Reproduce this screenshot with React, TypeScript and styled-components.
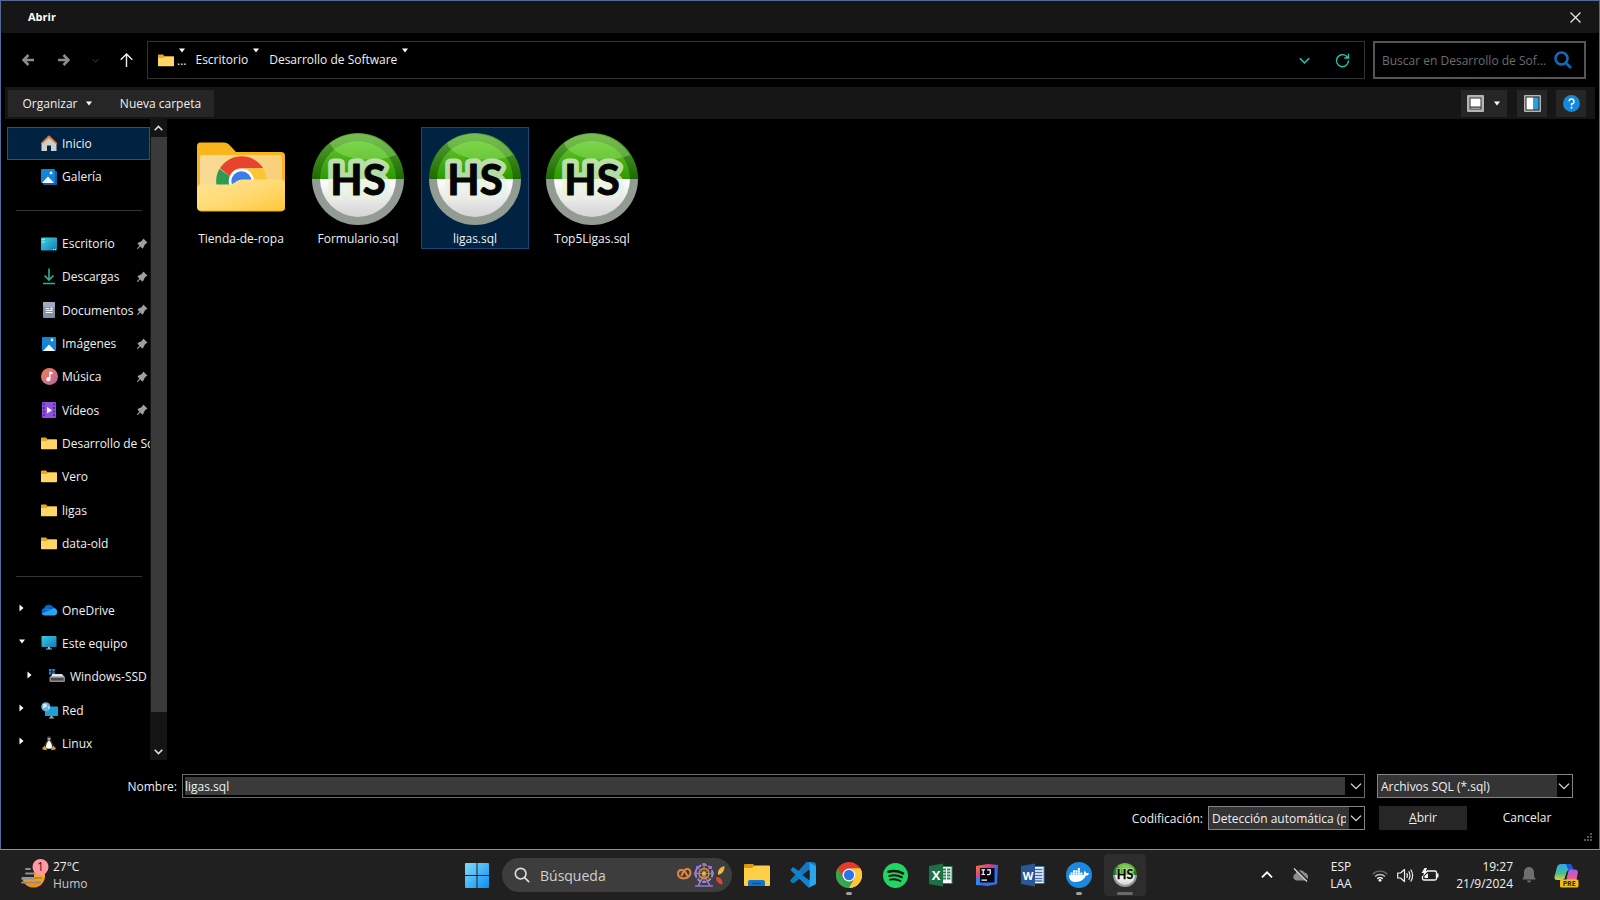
import React from "react";
import styled, { createGlobalStyle, css } from "styled-components";
import { FaDocker } from "react-icons/fa";
import { TbPinFilled } from "react-icons/tb";

const GlobalStyle = createGlobalStyle`
  *, *::before, *::after { box-sizing: border-box; }
  body { margin: 0; background: #000; }
  body, button, input, select {
    font-family: "Open Sans", "Noto Sans", sans-serif;
    font-size: 12px;
    line-height: 16px;
    color: #f0f0f0;
  }
  button { border: 0; padding: 0; background: none; }
  ul { list-style: none; margin: 0; padding: 0; }
  svg { display: block; flex: none; }
`;

const Screen = styled.div`
  min-height: 100vh;
  display: flex;
  flex-direction: column;
  background: #000;
`;

const Dialog = styled.main`
  position: relative;
  flex: 1;
  display: flex;
  flex-direction: column;
  border: 1px solid #536a96;
  border-bottom-color: #8494b6;
`;

const TitleBar = styled.header`
  display: flex;
  align-items: center;
  justify-content: space-between;
  height: 32px;
  padding: 0 8px 0 27px;
  background: #161616;
`;

const Title = styled.h1`
  margin: 0;
  font-size: 11px;
  font-weight: 700;
  line-height: 16px;
  color: #fff;
`;

const IconButton = styled.button<{ $width?: number }>`
  display: flex;
  align-items: center;
  justify-content: center;
  width: ${(p) => p.$width ?? 36}px;
  height: 32px;
`;

const NavRow = styled.nav`
  display: flex;
  align-items: center;
  height: 54px;
  padding: 0 13px 0 9px;
`;

const AddressBar = styled.div`
  flex: 1;
  min-width: 0;
  display: flex;
  align-items: center;
  height: 38px;
  margin: 0 8px 0 3px;
  padding: 0 3px 0 10px;
  border: 1px solid #333;
`;

const Crumb = styled.button<{ $gap?: number }>`
  display: flex;
  align-items: center;
  gap: ${(p) => p.$gap ?? 4}px;
  height: 30px;
  margin-right: 9px;
  white-space: nowrap;
`;

const CrumbArrow = styled.span`
  align-self: flex-start;
  padding-top: 3px;
`;

const CrumbMore = styled.span`
  display: flex;
  flex-direction: column;
  align-items: center;
  align-self: stretch;
  justify-content: space-between;
  padding: 3px 0 6px;
`;

const Spacer = styled.span`
  flex: 1;
`;

const SearchBox = styled.label`
  display: flex;
  align-items: center;
  width: 213px;
  height: 38px;
  padding: 0 12px 0 7px;
  border: 2px solid #555;
`;

const SearchInput = styled.input`
  flex: 1;
  min-width: 0;
  padding: 2px 0 0;
  border: 0;
  outline: 0;
  background: none;
  &::placeholder { color: #6e6e6e; opacity: 1; }
`;

const Toolbar = styled.div`
  display: flex;
  align-items: center;
  height: 32px;
  margin: 0 4px;
  padding: 1px 9px 0 3px;
  background: #161616;
`;

const ToolButton = styled.button<{ $width: number; $gap?: number; $inner?: number }>`
  display: flex;
  align-items: center;
  justify-content: center;
  gap: ${(p) => p.$inner ?? 9}px;
  width: ${(p) => p.$width}px;
  height: 27px;
  margin-left: ${(p) => p.$gap ?? 0}px;
  background: #262626;
`;

const Body = styled.div`
  flex: 1;
  display: flex;
`;

const Sidebar = styled.ul`
  display: grid;
  grid-auto-rows: 1fr;
  width: 143px;
  margin: 8px 0 0 6px;
`;

const TreeRow = styled.li`
  display: flex;
  align-items: center;
  min-width: 0;
`;

const TreeButton = styled.button<{ $selected?: boolean; $nested?: boolean }>`
  display: flex;
  align-items: center;
  width: 100%;
  height: 100%;
  padding: 0 1px 0 ${(p) => (p.$nested ? 8 : 0)}px;
  overflow: hidden;
  text-align: left;
  white-space: nowrap;
  ${(p) =>
    p.$selected &&
    css`
      background: #002342;
      box-shadow: inset 0 0 0 1px #12599c;
    `}
`;

const Twisty = styled.span`
  flex: none;
  width: 34px;
  padding: 0 0 4px 11px;
`;

const TreeIcon = styled.span`
  flex: none;
  display: flex;
  justify-content: center;
  width: 16px;
  margin-right: 5px;
`;

const TreeLabel = styled.span`
  flex: 1;
  padding-top: 1px;
`;

const Divider = styled.hr`
  width: 126px;
  margin: 0 0 0 9px;
  border: 0;
  border-top: 1px solid #333;
`;

const Scrollbar = styled.div`
  display: flex;
  flex-direction: column;
  width: 17px;
  background: #141414;
`;

const ScrollButton = styled.button`
  display: flex;
  align-items: center;
  justify-content: center;
  height: 18px;
`;

const ScrollTrack = styled.div`
  flex: 1;
  display: flex;
  flex-direction: column;
  padding-left: 1px;
`;

const ScrollThumb = styled.div`
  flex: 0 0 95%;
  background: #3a3a3a;
`;

const FileGrid = styled.ul`
  flex: 1;
  display: flex;
  flex-wrap: wrap;
  align-content: flex-start;
  gap: 9px;
  padding: 8px 0 0 20px;
`;

const FileTile = styled.button<{ $selected?: boolean }>`
  display: flex;
  flex-direction: column;
  align-items: center;
  gap: 6px;
  width: 108px;
  height: 122px;
  padding-top: 6px;
  ${(p) =>
    p.$selected &&
    css`
      background: #002342;
      box-shadow: inset 0 0 0 1px #12497c;
    `}
`;

const Footer = styled.form`
  display: grid;
  grid-template-columns: 181px minmax(0, 1fr) 196px;
  grid-template-rows: 24px 24px;
  row-gap: 8px;
  padding: 14px 26px 19px 0;
`;

const FieldLabel = styled.label`
  align-self: center;
  padding: 1px 5px 0 0;
  text-align: right;
`;

const ComboBox = styled.div`
  display: flex;
  align-items: center;
  margin-right: 12px;
  padding-left: 2px;
  border: 1px solid #6a6a6a;
`;

const NameInput = styled.input`
  flex: 1;
  min-width: 0;
  height: 18px;
  padding: 1px 0 0;
  border: 0;
  outline: 0;
  background: #3a3a3a;
`;

const ComboButton = styled.button`
  display: flex;
  align-items: center;
  justify-content: flex-end;
  width: 19px;
  height: 20px;
  padding-right: 2px;
`;

const SelectFrame = styled.div<{ $width?: number }>`
  display: flex;
  align-items: center;
  position: relative;
  width: ${(p) => (p.$width ? `${p.$width}px` : "auto")};
  height: 24px;
  border: 1px solid #848484;
  background: #000;
  svg { position: absolute; right: 2px; pointer-events: none; }
`;

const Select = styled.select`
  appearance: none;
  flex: 1;
  min-width: 0;
  height: 22px;
  margin-right: 15px;
  padding: 1px 3px 0;
  border: 0;
  border-radius: 0;
  outline: 0;
  background: #343434;
`;

const EncodingGroup = styled.div`
  grid-column: 1 / 3;
  display: flex;
  justify-content: flex-end;
  margin-right: 12px;
`;

const Actions = styled.div`
  display: flex;
  gap: 16px;
  padding-left: 2px;
`;

const ActionButton = styled.button<{ $filled?: boolean }>`
  width: 88px;
  background: ${(p) => (p.$filled ? "#262626" : "transparent")};
`;

const Grip = styled.span`
  position: absolute;
  right: 6px;
  bottom: 7px;
`;

const Taskbar = styled.footer`
  display: grid;
  grid-template-columns: 1fr auto 1fr;
  align-items: center;
  height: 50px;
  padding-left: 2px;
  background: #202020;
`;

const Weather = styled.button`
  justify-self: start;
  display: flex;
  align-items: center;
  gap: 4px;
  padding-left: 18px;
  text-align: left;
  line-height: 17px;
`;

const Muted = styled.span`
  display: block;
  color: #c8c8c8;
`;

const Apps = styled.div`
  display: flex;
  gap: 4px;
`;

const AppButton = styled.button<{ $active?: boolean }>`
  position: relative;
  display: flex;
  align-items: center;
  justify-content: center;
  width: 42px;
  height: 42px;
  border-radius: 4px;
  background: ${(p) => (p.$active ? "#2d2d2d" : "transparent")};
`;

const Indicator = styled.span<{ $wide?: boolean }>`
  position: absolute;
  bottom: 1px;
  width: ${(p) => (p.$wide ? 16 : 6)}px;
  height: 3px;
  border-radius: 2px;
  background: ${(p) => (p.$wide ? "#6a6a6a" : "#a0a0a0")};
`;

const TaskSearch = styled.label`
  align-self: center;
  display: flex;
  align-items: center;
  width: 230px;
  height: 34px;
  padding: 0 7px 0 12px;
  border-radius: 17px;
  background: #3d3d3d;
`;

const TaskSearchInput = styled.input`
  flex: 1;
  min-width: 0;
  padding: 2px 0 0 10px;
  border: 0;
  outline: 0;
  background: none;
  font-size: 14px;
  &::placeholder { color: #cfcfcf; opacity: 1; }
`;

const Tray = styled.div`
  justify-self: end;
  display: flex;
  align-items: center;
  padding-right: 13px;
`;

const TrayButton = styled.button<{ $width: number }>`
  display: flex;
  align-items: center;
  justify-content: center;
  width: ${(p) => p.$width}px;
  height: 40px;
`;

const TrayText = styled.button<{ $width: number; $align: "center" | "right" }>`
  width: ${(p) => p.$width}px;
  line-height: 17px;
  text-align: ${(p) => p.$align};
`;

/* ---------- drawings ---------- */

const Caret = ({ right }: { right?: boolean }) =>
  right ? (
    <svg width="8" height="8" viewBox="0 0 8 8"><path d="M1.500 0.500 5.500 4 1.500 7.500Z" fill="#fff" /></svg>
  ) : (
    <svg width="8" height="5" viewBox="0 0 8 5"><path d="M1 0.500H7L4 4.500Z" fill="#fff" /></svg>
  );

const Chevron = ({ size = 10, color = "#ddd", up, width = 1.4 }: { size?: number; color?: string; up?: boolean; width?: number }) => (
  <svg width={size} height={size} viewBox="0 0 10 10" fill="none" stroke={color} strokeWidth={width}>
    <path d={up ? "M.8 7 5 2.800 9.200 7" : "M.8 3 5 7.200 9.200 3"} />
  </svg>
);

const NavArrow = ({ flip }: { flip?: boolean }) => (
  <svg width="12" height="12" viewBox="0 0 12 12" fill="none" stroke="#8c8c8c" strokeWidth="2.600">
    <path d={flip ? "M0 6H10M5.500 1 10.500 6 5.500 11" : "M12 6H2M6.500 1 1.500 6 6.500 11"} />
  </svg>
);

const FolderIcon = () => (
  <svg width="16" height="13" viewBox="0 0 16 13">
    <path d="M0 1.200Q0 .5.8.5H5L6.500 2.300H15.200Q16 2.300 16 3V12H0Z" fill="#e9a820" />
    <path d="M0 4H5.500L7 2.800H16V11.500Q16 12.300 15.200 12.300H.8Q0 12.300 0 11.500Z" fill="#ffd667" />
  </svg>
);

const HomeIcon = () => (
  <svg width="16" height="17" viewBox="0 0 16 17">
    <path d="M.8 8.500 8 1.500 15.200 8.500" fill="none" stroke="#e07b30" strokeWidth="2" strokeLinecap="round" strokeLinejoin="round" />
    <path d="M.5 9.500 8 2.800 15.500 9.500V16H10V10.500H6V16H.5Z" fill="#cfcfd2" />
  </svg>
);

const PictureIcon = ({ stacked }: { stacked?: boolean }) => (
  <svg width="16" height="16" viewBox="0 0 16 16">
    {stacked && <rect x="2" y="2" width="14" height="14" rx="1" fill="#0f5fa8" />}
    <rect x={stacked ? 0 : 1} y={stacked ? 0 : 1} width="14" height="14" rx="1" fill="#1583d8" />
    <path d={stacked ? "M1 14 7 7.500 13 14Z" : "M2 15 8 8.500 14 15Z"} fill="#f5faff" />
    <circle cx={stacked ? 10 : 11} cy="4" r="1.400" fill="#dff0ff" />
  </svg>
);

const DesktopIcon = () => (
  <svg width="16" height="14" viewBox="0 0 16 14">
    <defs><linearGradient id="desk" x1="0" y1="0" x2="1" y2="1"><stop offset="0" stopColor="#43d3e2" /><stop offset="1" stopColor="#0f7cb8" /></linearGradient></defs>
    <rect y=".5" width="16" height="13" rx="1" fill="url(#desk)" />
    <path d="M1.500 2H3.500V3H1.500ZM1.500 4.500H3.500V5.500H1.500ZM12 12H13V13H12ZM14 12H15V13H14Z" fill="#e6fcff" />
  </svg>
);

const DownloadIcon = () => (
  <svg width="14" height="17" viewBox="0 0 14 17" fill="none" stroke="#2bb394" strokeWidth="1.600">
    <path d="M7 .5V12M2.500 7.500 7 12 11.500 7.500M1 15.500H13" />
  </svg>
);

const DocumentIcon = () => (
  <svg width="12" height="16" viewBox="0 0 12 16">
    <rect width="12" height="16" rx="1" fill="#8092a8" />
    <rect width="12" height="5" rx="1" fill="#9dacbe" />
    <path d="M2.500 6.500H6M2.500 8.500H9.500M2.500 10.500H9.500" stroke="#f4f7fa" strokeWidth="1" />
    <rect x="7.500" y="5.500" width="2" height="2" fill="#fff" />
  </svg>
);

const MusicIcon = () => (
  <svg width="17" height="17" viewBox="0 0 17 17">
    <defs><linearGradient id="mus" x1="0" y1="0" x2="1" y2="1"><stop offset="0" stopColor="#ef8152" /><stop offset="1" stopColor="#b764a5" /></linearGradient></defs>
    <circle cx="8.500" cy="8.500" r="8.500" fill="url(#mus)" />
    <path d="M8.200 3.500 11.500 4.300V6.300L9.500 5.900V11A2.100 2.100 0 1 1 8.200 9.200Z" fill="#fff" />
  </svg>
);

const VideoIcon = () => (
  <svg width="14" height="16" viewBox="0 0 14 16">
    <rect width="14" height="16" rx="1" fill="#8f4fe0" />
    <path d="M2 1.500V15M12 1.500V15" stroke="#41207d" strokeWidth="1.500" strokeDasharray="1.800 1.800" />
    <path d="M5 5 10 8.200 5 11.400Z" fill="#fff" />
  </svg>
);

const CloudIcon = () => (
  <svg width="17" height="12" viewBox="0 0 17 12">
    <path d="M3.500 11A3.500 3.500 0 0 1 3 4.200 5.300 5.300 0 0 1 12.700 3.600 4 4 0 0 1 13 11Z" fill="#0a63c9" />
    <path d="M3 5Q6 4 9 6L12.800 4.200A3.700 3.700 0 0 1 13.300 11.500H3.700Q1.500 11.500 .7 9.500L9 6Z" fill="#2ba4ee" />
  </svg>
);

const MonitorIcon = () => (
  <svg width="16" height="14" viewBox="0 0 16 14">
    <defs><linearGradient id="mon" x1="0" y1="0" x2="1" y2="1"><stop offset="0" stopColor="#3cc9e0" /><stop offset="1" stopColor="#117bbd" /></linearGradient></defs>
    <rect x=".5" width="15" height="11" rx=".8" fill="url(#mon)" />
    <path d="M7 11H9V12.500H11V13.500H5V12.500H7Z" fill="#a9b6c0" />
  </svg>
);

const DriveIcon = () => (
  <svg width="16" height="16" viewBox="0 0 16 16">
    <path d="M0 0H2.500V2.500H0ZM3.300 0H5.800V2.500H3.300ZM0 3.200H2.500V5.500H0ZM3.300 3.200H5.800V5.500H3.300Z" fill="#1c93e0" />
    <path d="M1.500 8 3.500 5H13L15.500 8Z" fill="#e4e4e4" />
    <rect x=".5" y="7.500" width="15.500" height="5.500" rx="1" fill="#8b8b8b" />
    <rect x="2" y="9" width="12.500" height="2.500" fill="#4b4b4b" />
  </svg>
);

const NetworkIcon = () => (
  <svg width="17" height="17" viewBox="0 0 17 17">
    <rect x="4" y="4.500" width="13" height="9.500" rx=".8" fill="#1ea0d6" />
    <path d="M9.500 14H11.500V15.500H13V16.500H8V15.500H9.500Z" fill="#a9b6c0" />
    <circle cx="4.800" cy="4.800" r="4.600" fill="#6fb2d8" />
    <path d="M2 2.500Q4 1 5.500 2.500T4 5.500 2 6ZM6.500 5.500 8.500 4 8 7.500Z" fill="#d9eef8" />
  </svg>
);

const TuxIcon = () => (
  <svg width="14" height="15" viewBox="0 0 14 15">
    <path d="M7 0C9 0 9.300 2 9.300 3.800 9.600 6 12 8 12 11.500 12 13.500 2 13.500 2 11.500 2 8 4.400 6 4.700 3.800 4.700 2 5 0 7 0Z" fill="#2c2c2c" />
    <path d="M7 4.500C8.500 5.500 10.300 8.500 10 11.500Q7 14 4 11.500C3.700 8.500 5.500 5.500 7 4.500Z" fill="#fff" />
    <path d="M5.500 3.300H8.500L7 5Z" fill="#e5b23a" />
    <path d="M.3 12 2.500 9.800 5 12.800 4.500 14.200.5 13.500ZM13.700 12 11.500 9.800 9 12.800 9.500 14.200 13.500 13.500Z" fill="#d9a027" />
    <circle cx="6.200" cy="2.300" r=".6" fill="#fff" /><circle cx="7.800" cy="2.300" r=".6" fill="#fff" />
  </svg>
);

const ChromeIcon = ({ size = 26 }: { size?: number }) => (
  <svg width={size} height={size} viewBox="0 0 48 48">
    <circle cx="24" cy="24" r="24" fill="#e33b2e" />
    <path d="M3.200 12 13.600 30A12 12 0 0 0 24 36L24 48A24 24 0 0 1 3.200 12Z" fill="#2da94f" />
    <path d="M24 48 34.400 30A12 12 0 0 0 34.400 18L30 12H44.800A24 24 0 0 1 24 48Z" fill="#fcc934" />
    <path d="M13.600 30A12 12 0 0 0 34.400 30L24 48Z" fill="#2da94f" />
    <path d="M34.400 30 24 48A24 24 0 0 0 44.800 12H24A12 12 0 0 1 34.400 30Z" fill="#fcc934" />
    <circle cx="24" cy="24" r="12" fill="#fff" />
    <circle cx="24" cy="24" r="9.500" fill="#2a76e8" />
  </svg>
);

const BigFolder = () => (
  <svg width="92" height="92" viewBox="0 0 92 92">
    <defs>
      <linearGradient id="front" x1="0" y1="0" x2="1" y2="1"><stop offset="0" stopColor="#ffe394" /><stop offset=".5" stopColor="#ffdb75" /><stop offset="1" stopColor="#ffc638" /></linearGradient>
      <linearGradient id="paper" x1="0" y1="0" x2="1" y2="0"><stop offset="0" stopColor="#f7dc97" /><stop offset="1" stopColor="#f9cf78" /></linearGradient>
    </defs>
    <path d="M2 13Q2 9.500 5.500 9.500H29Q32 9.500 34 11.500L41 19H86Q90 19 90 23V60H2Z" fill="#f9b51c" />
    <rect x="5" y="22" width="82" height="45" rx="2" fill="url(#paper)" />
    <g transform="translate(21 23) scale(1.060)">
      <path d="M3.800 11.500A24 24 0 0 1 44.500 11.500H24A12 12 0 0 0 13 19Z" fill="#e8432f" />
      <path d="M3.200 12A24 24 0 0 0 1 30H15L13 19Z" fill="#2f9a54" />
      <path d="M44.500 11.500A24 24 0 0 1 47 30H30V11.500Z" fill="#fcc437" />
      <circle cx="24" cy="24" r="12" fill="#fff" /><circle cx="24" cy="24" r="9.500" fill="#3b7de8" />
    </g>
    <path d="M2 55Q2 51.500 6 51.500H34Q37 51.500 39 50L42 48Q44 46.500 47 46.500H86Q90 46.500 90 50V74Q90 78 86 78H6Q2 78 2 74Z" fill="url(#front)" />
    <path d="M3 76Q4 78 6 78H86Q89 78 90 75" fill="none" stroke="#e8b030" />
  </svg>
);

const HeidiIcon = ({ size = 92 }: { size?: number }) => {
  const small = size < 40;
  return (
    <svg width={size} height={size} viewBox="0 0 92 92">
      <defs>
        <linearGradient id="hsg" x1="0" y1="0" x2="0" y2="1"><stop offset="0" stopColor="#62c82c" /><stop offset="1" stopColor="#2c9a00" /></linearGradient>
        <linearGradient id="hsr" x1="0" y1="0" x2="0" y2="1"><stop offset="0" stopColor="#5aa53a" /><stop offset="1" stopColor="#1d6b00" /></linearGradient>
        <linearGradient id="hsw" x1="0" y1="0" x2="0" y2="1"><stop offset="0" stopColor="#fff" /><stop offset="1" stopColor="#d4d4d4" /></linearGradient>
      </defs>
      <path d="M0 46A46 46 0 0 1 92 46Z" fill="url(#hsr)" />
      <path d="M0 46A46 46 0 0 0 92 46Z" fill="#939c93" />
      <path d="M8 46A38 38 0 0 1 84 46Z" fill="url(#hsg)" />
      <path d="M8 46A38 38 0 0 0 84 46Z" fill="url(#hsw)" />
      <path d="M18 10A46 46 0 0 1 84 22Q70 28 46 26 22 22 18 10Z" fill="#b0f080" fillOpacity=".35" />
      <g textAnchor="middle" fontFamily="Lato, sans-serif" fontWeight="700" fontSize={small ? 48 : 42} strokeLinejoin="round">
        <text x="46" y={small ? 63 : 62} fill="#e8f3e2" stroke="#e8f3e2" opacity=".72" strokeWidth={small ? 8 : 11}>HS</text>
        <text x="46" y={small ? 63 : 62} fill="#050505" stroke="#050505" strokeWidth="1">HS</text>
      </g>
    </svg>
  );
};

const CloseIcon = () => (
  <svg width="11" height="11" viewBox="0 0 11 11"><path d="M.5.5 10.500 10.500M10.500.5.5 10.500" stroke="#e6e6e6" strokeWidth="1.300" /></svg>
);

const UpIcon = () => (
  <svg width="13" height="14" viewBox="0 0 13 14" fill="none" stroke="#f0f0f0" strokeWidth="1.400"><path d="M6.500 14V1M.7 6.800 6.500 1 12.300 6.800" /></svg>
);

const RefreshIcon = () => (
  <svg width="15" height="15" viewBox="0 0 15 15" fill="none" stroke="#1fc9b2" strokeWidth="1.400">
    <path d="M13.500 7.500A6 6 0 1 1 11.500 3.200L13 4.800M13.500.8V5H9.300" />
  </svg>
);

const MagnifierIcon = ({ size, color, width }: { size: number; color: string; width: number }) => (
  <svg width={size} height={size} viewBox="0 0 18 18" fill="none" stroke={color} strokeWidth={width}>
    <circle cx="7.500" cy="7.500" r="6" /><path d="M12 12 17 17" />
  </svg>
);

const ViewIcon = () => (
  <svg width="17" height="17" viewBox="0 0 17 17">
    <rect width="17" height="17" rx="1" fill="#b4b4b4" />
    <rect x="2.500" y="2.500" width="12" height="12" fill="#333" /><rect x="3.500" y="3.500" width="10" height="8" fill="#fff" /><rect x="3.500" y="12.500" width="10" height="1.500" fill="#999" />
  </svg>
);

const PaneIcon = () => (
  <svg width="17" height="17" viewBox="0 0 17 17">
    <rect width="17" height="17" rx="1" fill="#b4b4b4" />
    <rect x="1.500" y="1.500" width="14" height="14" fill="#222" /><rect x="2.500" y="2.500" width="7" height="12" fill="#fff" /><rect x="9.500" y="2.500" width="5" height="12" fill="#2a9fe0" />
  </svg>
);

const HelpIcon = () => (
  <svg width="17" height="17" viewBox="0 0 17 17">
    <circle cx="8.500" cy="8.500" r="8.500" fill="#1489dc" />
    <path d="M6 6.300A2.500 2.500 0 1 1 8.500 9V10.500" fill="none" stroke="#fff" strokeWidth="1.400" /><circle cx="8.500" cy="12.800" r="1" fill="#fff" />
  </svg>
);

const GripIcon = () => (
  <svg width="9" height="9" viewBox="0 0 9 9" fill="#555"><path d="M6 0H8V2H6ZM3 3H5V5H3ZM6 3H8V5H6ZM0 6H2V8H0ZM3 6H5V8H3ZM6 6H8V8H6Z" /></svg>
);

const WeatherIcon = () => (
  <svg width="29" height="32" viewBox="0 0 29 32">
    <defs><linearGradient id="sun" x1="0" y1="0" x2="0" y2="1"><stop offset="0" stopColor="#ffc53d" /><stop offset="1" stopColor="#ee8a1f" /></linearGradient></defs>
    <circle cx="13.500" cy="17" r="11.500" fill="url(#sun)" />
    <path d="M0 3H14V18H0Z" fill="#202020" />
    <path d="M6 10H10M6 14.500H15M2 19.500H14M2 23.500H20" stroke="#8d8d8d" strokeWidth="1.900" strokeLinecap="round" />
    <path d="M14 19H22" stroke="#b8873a" strokeWidth="1.900" />
    <circle cx="20.500" cy="8" r="8" fill="#ff99a4" />
    <text x="20.500" y="12" textAnchor="middle" fontSize="12" fill="#2b2020">1</text>
  </svg>
);

const WindowsIcon = () => (
  <svg width="24" height="25" viewBox="0 0 24 25">
    <defs><linearGradient id="win" x1="0" y1="0" x2="1" y2="1"><stop offset="0" stopColor="#7fdcfb" /><stop offset="1" stopColor="#0c8ff0" /></linearGradient></defs>
    <path d="M1 0H11.500V12H0V1Q0 0 1 0ZM12.500 0H23Q24 0 24 1V12H12.500ZM0 13H11.500V25H1Q0 25 0 24ZM12.500 13H24V24Q24 25 23 25H12.500Z" fill="url(#win)" />
  </svg>
);

const FestiveIcon = () => (
  <svg width="48" height="24" viewBox="0 0 48 24" fill="none">
    <g stroke="#e5843c" strokeWidth="2"><path d="M7 15.500Q.8 15 1 10.500 1.500 6.500 5 7 8 7.500 10.500 13M7 15.500Q13.500 14.500 13.500 9.500 13 5.500 9.500 6 6.500 7 4.500 13" /></g>
    <path d="M21 23 27 12 33 23M18 23H36" stroke="#8f75d8" strokeWidth="1.600" />
    <circle cx="27" cy="10.500" r="8.500" stroke="#a98be0" strokeWidth="1.800" strokeDasharray="4 1.500" />
    <circle cx="27" cy="10.500" r="5" stroke="#d8953a" strokeWidth="1.400" />
    <path d="M27 2V19M18.500 10.500H35.500M21 4.500 33 16.500M33 4.500 21 16.500" stroke="#b9873e" strokeWidth="1" />
    <g fill="#8f75d8"><rect x="25.500" y="0" width="3" height="3" /><rect x="17" y="9" width="3" height="3" /><rect x="34" y="9" width="3" height="3" /><rect x="19" y="3" width="3" height="3" /><rect x="32" y="3" width="3" height="3" /></g>
    <circle cx="27" cy="10.500" r="2" fill="#f0b04a" />
    <path d="M41 12Q40 5 47.500 3 48 10 41 12Z" fill="#f2b63e" /><path d="M39 14Q46 14 45.500 21.500 39 21 39 14Z" fill="#e0453a" />
  </svg>
);

const ExplorerIcon = () => (
  <svg width="26" height="24" viewBox="0 0 26 24">
    <path d="M0 2Q0 1 1 1H9L12 4H12V10H0Z" fill="#d8990f" />
    <path d="M0 5H8L11 2.500H25Q26 2.500 26 3.500V22Q26 23 25 23H1Q0 23 0 22Z" fill="#ffcf48" />
    <path d="M4 23V19Q4 17 6 17H19Q21 17 21 19V23Z" fill="#1277cc" /><path d="M8 20.500H17" stroke="#0b4f92" strokeWidth="1.500" />
  </svg>
);

const CodeIcon = () => (
  <svg width="26" height="26" viewBox="0 0 100 100">
    <path d="M71 1 96 13Q100 15 100 19V27L15 91Q12 93 9 91L2 85Q-1 82 2 79Z" transform="translate(0 -10)" fill="#1377bd" />
    <path d="M2 31 9 21Q12 19 15 21L100 82Q100 85 96 87L71 99Z" fill="#0f83cd" />
    <path d="M71 1 96 13Q100 15 100 19V81Q100 85 96 87L71 99Q75 97 75 92V8Q75 3 71 1Z" fill="#2ba6ec" />
    <path d="M75 29V71L47 50Z" fill="#202020" />
  </svg>
);

const SpotifyIcon = () => (
  <svg width="25" height="25" viewBox="0 0 25 25" fill="none" stroke="#131313" strokeLinecap="round">
    <circle cx="12.500" cy="12.500" r="12.500" fill="#1fd662" stroke="none" />
    <path d="M5.500 8.700Q13 6.700 20 10.300" strokeWidth="2.600" /><path d="M6.300 12.900Q13 11.200 18.800 14.200" strokeWidth="2.100" /><path d="M7 16.700Q12.500 15.400 17.500 18" strokeWidth="1.800" />
  </svg>
);

const OfficeIcon = ({ letter, dark, light }: { letter: string; dark: string; light: string }) => (
  <svg width="24" height="24" viewBox="0 0 24 24">
    <rect x="12" y="3.500" width="11" height="17" fill="#fff" stroke={light} strokeWidth="1" />
    {letter === "X" ? (
      <path d="M14 6.500H17M18 6.500H21.500M14 9.500H17M18 9.500H21.500M14 12.500H17M18 12.500H21.500M14 15.500H17M18 15.500H21.500" stroke={light} strokeWidth="1.800" />
    ) : (
      <path d="M14 6.500H21.500M14 9.500H21.500M14 12.500H21.500M14 15.500H21.500M14 18H21.500" stroke={light} strokeWidth="1.400" />
    )}
    <path d="M0 3 14 0.500V23.500L0 21Z" fill={dark} />
    <text x="7" y="16.500" textAnchor="middle" fontFamily="Open Sans, sans-serif" fontWeight="700" fontSize={letter === "X" ? 13 : 11} fill="#fff">{letter}</text>
  </svg>
);

const IdeaIcon = () => (
  <svg width="22" height="22" viewBox="0 0 22 22">
    <defs><linearGradient id="ij" x1="0" y1="0" x2="1" y2="1"><stop offset="0" stopColor="#f97a3c" /><stop offset=".35" stopColor="#d8408a" /><stop offset=".6" stopColor="#3468ee" /><stop offset="1" stopColor="#2d7ff5" /></linearGradient></defs>
    <path d="M0 2 12 0 22 1 21 20 12 22 0 21Z" fill="url(#ij)" />
    <path d="M0 13H4V21L0 21Z" fill="#2d86f5" />
    <rect x="4" y="4" width="14.500" height="14.500" fill="#0a0610" />
    <path d="M5.500 5.800H9M7.200 5.800V10.500M5.500 10.500H9M11 5.800H14.300V9.200Q14.300 10.600 12.700 10.600H11M5.500 16.200H11" fill="none" stroke="#fff" strokeWidth="1.200" />
  </svg>
);

const DockerBadge = styled.span`
  display: flex;
  align-items: center;
  justify-content: center;
  width: 26px;
  height: 26px;
  border-radius: 50%;
  background: #1d88e0;
  color: #fff;
`;

const NoSyncIcon = () => (
  <svg width="18" height="14" viewBox="0 0 18 14">
    <path d="M4 12.500A3.500 3.500 0 0 1 3.500 5.800 5 5 0 0 1 12.500 4.500 4.200 4.200 0 0 1 13.500 12.500Z" fill="#8c8c8c" />
    <path d="M3 .5 15.500 13" stroke="#202020" strokeWidth="2.500" /><path d="M2 .5 15 13.500" stroke="#e0e0e0" strokeWidth="1.300" />
  </svg>
);

const WifiIcon = () => (
  <svg width="16" height="13" viewBox="0 0 16 13" fill="none" strokeWidth="1.400">
    <path d="M.7 5.200A10.300 10.300 0 0 1 15.300 5.200" stroke="#666" /><path d="M3 7.600A7 7 0 0 1 13 7.600" stroke="#bbb" /><path d="M5.200 9.800A4 4 0 0 1 10.800 9.800" stroke="#fff" /><circle cx="8" cy="11.300" r="1.400" fill="#fff" />
  </svg>
);

const SpeakerIcon = () => (
  <svg width="17" height="15" viewBox="0 0 17 15" fill="none" stroke="#f0f0f0" strokeWidth="1.200" strokeLinejoin="round">
    <path d="M.7 5V10H3.500L7.500 13.500V1.500L3.500 5ZM9.700 5.200Q11 7.500 9.700 9.800M11.700 3.300Q14.200 7.500 11.700 11.700M13.700 1.500Q17.500 7.500 13.700 13.500" />
  </svg>
);

const BatteryIcon = () => (
  <svg width="18" height="14" viewBox="0 0 18 14">
    <path d="M6 3H14Q15.500 3 15.500 4.500V10.500Q15.500 12 14 12H3Q1.500 12 1.500 10.500V8" fill="none" stroke="#f5f5f5" strokeWidth="1.300" />
    <path d="M16 5.500H17.500V9.500H16ZM3.500 10V8L7 5V10Z" fill="#f5f5f5" /><path d="M3.500 0H6L5 3H7L2 8.500 3 5H.5Z" fill="#f5f5f5" />
  </svg>
);

const BellIcon = () => (
  <svg width="14" height="16" viewBox="0 0 14 16" fill="#6e6e6e"><path d="M7 0A5 5 0 0 1 12 5V9L13.700 12.500H.3L2 9V5A5 5 0 0 1 7 0ZM5 13.500H9A2 2 0 0 1 5 13.500Z" /></svg>
);

const CopilotIcon = () => (
  <svg width="25" height="25" viewBox="0 0 25 25">
    <defs>
      <linearGradient id="cpa" x1="0" y1="0" x2="0" y2="1"><stop offset="0" stopColor="#27a9f2" /><stop offset=".6" stopColor="#4bc08b" /><stop offset="1" stopColor="#e6cf3a" /></linearGradient>
      <linearGradient id="cpb" x1="0" y1="0" x2="0" y2="1"><stop offset="0" stopColor="#9a63f0" /><stop offset=".6" stopColor="#e5589c" /><stop offset="1" stopColor="#f58a5c" /></linearGradient>
    </defs>
    <path d="M7 1H15Q17.500 1 18.300 4L19 6.500H16Q13.500 6.500 12.500 10L11 15Q10.500 17 8 17H3Q-.5 17 .7 13L3 4Q4 1 7 1Z" fill="url(#cpa)" />
    <path d="M15 1Q17.500 1 18.300 4L19 6.500H14L12 1Z" fill="#1f55d8" />
    <path d="M16 6.500H20.500Q24.500 6.500 23.700 10.500L22 19H12L14 9Q14.500 6.500 16 6.500Z" fill="url(#cpb)" />
    <path d="M14 9 11.500 17H9Q10.500 17 11 15L12.500 10Q13 8 14.500 7Z" fill="#202020" />
    <rect x="6" y="16.500" width="18.500" height="8" rx="1.500" fill="#f3bd16" />
    <text x="15.200" y="23.200" textAnchor="middle" fontWeight="700" fontSize="7" fill="#33270a">PRE</text>
  </svg>
);

/* ---------- data ---------- */

type Node = { label: string; icon: React.ReactNode; pinned?: boolean; selected?: boolean; nested?: boolean; arrow?: "open" | "closed" } | null;

const tree: Node[] = [
  { label: "Inicio", icon: <HomeIcon />, selected: true },
  { label: "Galería", icon: <PictureIcon stacked /> },
  null,
  { label: "Escritorio", icon: <DesktopIcon />, pinned: true },
  { label: "Descargas", icon: <DownloadIcon />, pinned: true },
  { label: "Documentos", icon: <DocumentIcon />, pinned: true },
  { label: "Imágenes", icon: <PictureIcon />, pinned: true },
  { label: "Música", icon: <MusicIcon />, pinned: true },
  { label: "Vídeos", icon: <VideoIcon />, pinned: true },
  { label: "Desarrollo de Software", icon: <FolderIcon /> },
  { label: "Vero", icon: <FolderIcon /> },
  { label: "ligas", icon: <FolderIcon /> },
  { label: "data-old", icon: <FolderIcon /> },
  null,
  { label: "OneDrive", icon: <CloudIcon />, arrow: "closed" },
  { label: "Este equipo", icon: <MonitorIcon />, arrow: "open" },
  { label: "Windows-SSD", icon: <DriveIcon />, arrow: "closed", nested: true },
  { label: "Red", icon: <NetworkIcon />, arrow: "closed" },
  { label: "Linux", icon: <TuxIcon />, arrow: "closed" },
];

const files = [
  { name: "Tienda-de-ropa", icon: <BigFolder /> },
  { name: "Formulario.sql", icon: <HeidiIcon /> },
  { name: "ligas.sql", icon: <HeidiIcon />, selected: true },
  { name: "Top5Ligas.sql", icon: <HeidiIcon /> },
];

const apps: { name: string; icon: React.ReactNode; running?: boolean; active?: boolean }[] = [
  { name: "Explorador de archivos", icon: <ExplorerIcon /> },
  { name: "Visual Studio Code", icon: <CodeIcon /> },
  { name: "Google Chrome", icon: <ChromeIcon />, running: true },
  { name: "Spotify", icon: <SpotifyIcon /> },
  { name: "Excel", icon: <OfficeIcon letter="X" dark="#1e7145" light="#2c8a57" /> },
  { name: "IntelliJ IDEA", icon: <IdeaIcon /> },
  { name: "Word", icon: <OfficeIcon letter="W" dark="#2b579a" light="#3f6fb8" /> },
  { name: "Docker", icon: <DockerBadge><FaDocker size={20} /></DockerBadge>, running: true },
  { name: "HeidiSQL", icon: <HeidiIcon size={24} />, running: true, active: true },
];

export default function App() {
  return (
    <Screen>
      <GlobalStyle />
      <Dialog>
        <TitleBar>
          <Title>Abrir</Title>
          <IconButton aria-label="Cerrar" $width={32}><CloseIcon /></IconButton>
        </TitleBar>

        <NavRow>
          <IconButton aria-label="Atrás"><NavArrow /></IconButton>
          <IconButton aria-label="Adelante"><NavArrow flip /></IconButton>
          <IconButton aria-label="Recientes" $width={26}><Chevron size={7} color="#444" /></IconButton>
          <IconButton aria-label="Subir"><UpIcon /></IconButton>
          <AddressBar>
            <Crumb $gap={3}>
              <FolderIcon />
              <CrumbMore><Caret />...</CrumbMore>
            </Crumb>
            <Crumb>Escritorio<CrumbArrow><Caret /></CrumbArrow></Crumb>
            <Crumb>Desarrollo de Software<CrumbArrow><Caret /></CrumbArrow></Crumb>
            <Spacer />
            <IconButton type="button" aria-label="Ubicaciones anteriores" $width={38}><Chevron size={11} color="#1fc9b2" /></IconButton>
            <IconButton type="button" aria-label="Actualizar" $width={38}><RefreshIcon /></IconButton>
          </AddressBar>
          <SearchBox>
            <SearchInput aria-label="Buscar" placeholder="Buscar en Desarrollo de Sof..." />
            <MagnifierIcon size={18} color="#1568b4" width={2.6} />
          </SearchBox>
        </NavRow>

        <Toolbar>
          <ToolButton $width={99} $inner={7}>Organizar<Caret /></ToolButton>
          <ToolButton $width={107}>Nueva carpeta</ToolButton>
          <Spacer />
          <ToolButton aria-label="Vista" $width={46}><ViewIcon /><Caret /></ToolButton>
          <ToolButton aria-label="Panel de vista previa" $width={30} $gap={10}><PaneIcon /></ToolButton>
          <ToolButton aria-label="Ayuda" $width={30} $gap={9}><HelpIcon /></ToolButton>
        </Toolbar>

        <Body>
          <Sidebar>
            {tree.map((node, i) => (
              <TreeRow key={i}>
                {node === null ? (
                  <Divider />
                ) : (
                  <TreeButton $selected={node.selected} $nested={node.nested}>
                    <Twisty>{node.arrow && <Caret right={node.arrow === "closed"} />}</Twisty>
                    <TreeIcon>{node.icon}</TreeIcon>
                    <TreeLabel>{node.label}</TreeLabel>
                    {node.pinned && <TbPinFilled size={14} color="#9aa0a6" />}
                  </TreeButton>
                )}
              </TreeRow>
            ))}
          </Sidebar>
          <Scrollbar>
            <ScrollButton aria-label="Desplazar arriba"><Chevron up size={9} width={1.8} /></ScrollButton>
            <ScrollTrack><ScrollThumb /></ScrollTrack>
            <ScrollButton aria-label="Desplazar abajo"><Chevron size={9} width={1.8} /></ScrollButton>
          </Scrollbar>
          <FileGrid>
            {files.map((file) => (
              <li key={file.name}>
                <FileTile $selected={file.selected}>
                  {file.icon}
                  {file.name}
                </FileTile>
              </li>
            ))}
          </FileGrid>
        </Body>

        <Footer onSubmit={(e) => e.preventDefault()}>
          <FieldLabel htmlFor="name">Nombre:</FieldLabel>
          <ComboBox>
            <NameInput id="name" defaultValue="ligas.sql" />
            <ComboButton type="button" aria-label="Nombres anteriores"><Chevron size={12} width={1.1} /></ComboButton>
          </ComboBox>
          <SelectFrame>
            <Select aria-label="Tipo de archivo"><option>Archivos SQL (*.sql)</option></Select>
            <Chevron size={12} width={1.1} />
          </SelectFrame>
          <EncodingGroup>
            <FieldLabel htmlFor="encoding">Codificación:</FieldLabel>
            <SelectFrame $width={157}>
              <Select id="encoding"><option>Detección automática (puede fallar)</option></Select>
              <Chevron size={12} width={1.1} />
            </SelectFrame>
          </EncodingGroup>
          <Actions>
            <ActionButton $filled><u>A</u>brir</ActionButton>
            <ActionButton type="button">Cancelar</ActionButton>
          </Actions>
        </Footer>
        <Grip><GripIcon /></Grip>
      </Dialog>

      <Taskbar>
        <Weather>
          <WeatherIcon />
          <span>27°C<Muted>Humo</Muted></span>
        </Weather>
        <Apps>
          <AppButton aria-label="Inicio de Windows"><WindowsIcon /></AppButton>
          <TaskSearch>
            <MagnifierIcon size={16} color="#e0e0e0" width={1.8} />
            <TaskSearchInput aria-label="Búsqueda" placeholder="Búsqueda" />
            <FestiveIcon />
          </TaskSearch>
          {apps.map((app) => (
            <AppButton key={app.name} aria-label={app.name} $active={app.active}>
              {app.icon}
              {app.running && <Indicator $wide={app.active} />}
            </AppButton>
          ))}
        </Apps>
        <Tray>
          <TrayButton aria-label="Iconos ocultos" $width={34}><Chevron up size={12} color="#fff" width={1.5} /></TrayButton>
          <TrayButton aria-label="OneDrive" $width={34}><NoSyncIcon /></TrayButton>
          <TrayText $width={46} $align="center">ESP<br />LAA</TrayText>
          <TrayButton aria-label="Red" $width={32}><WifiIcon /></TrayButton>
          <TrayButton aria-label="Volumen" $width={18}><SpeakerIcon /></TrayButton>
          <TrayButton aria-label="Batería" $width={32}><BatteryIcon /></TrayButton>
          <TrayText $width={67} $align="right">19:27<br />21/9/2024</TrayText>
          <TrayButton aria-label="Notificaciones" $width={32}><BellIcon /></TrayButton>
          <TrayButton aria-label="Copilot" $width={42}><CopilotIcon /></TrayButton>
        </Tray>
      </Taskbar>
    </Screen>
  );
}
